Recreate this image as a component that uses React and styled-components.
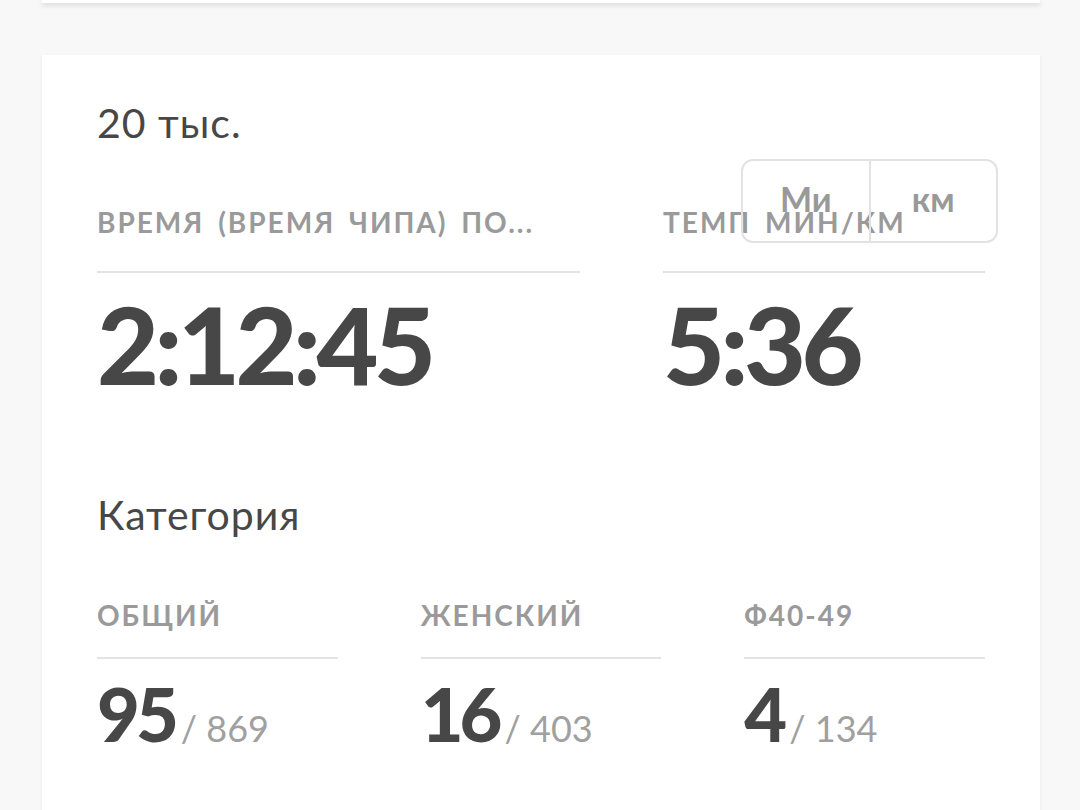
import React from "react";
import styled, { createGlobalStyle } from "styled-components";

const GlobalStyle = createGlobalStyle`
    html, body {
        margin: 0;
        padding: 0;
        background: #f8f8f8;
        font-family: 'Lato', 'Open Sans', sans-serif;
        overflow: hidden;
    }
`

const Page = styled.div`
    width: 1080px;
    height: 810px;
    padding: 0 40px 0 42px;
    box-sizing: border-box;
`

const TopCard = styled.div`
    height: 3px;
    background: #ffffff;
    box-shadow: 0 2px 5px rgba(0, 0, 0, 0.18);
    margin-bottom: 52px;
`

const Card = styled.div`
    position: relative;
    background: #ffffff;
    box-shadow: 0 1px 3px rgba(0, 0, 0, 0.07);
    padding: 44px 55px 90px 55px;
`

const Heading = styled.div`
    font-size: 41px;
    line-height: 48px;
    font-weight: 400;
    letter-spacing: 1px;
    color: #474747;
    margin-top: ${({ top }) => top || 0}px;
`

const Row = styled.div`
    display: flex;
    gap: 83px;
    margin-top: ${({ top }) => top}px;
`

const Column = styled.div`
    flex: ${({ grow }) => grow || 1};
    min-width: 0;
`

const Label = styled.div`
    font-size: 28px;
    line-height: 34px;
    font-weight: 700;
    letter-spacing: 2px;
    word-spacing: 5px;
    text-transform: uppercase;
    color: #9a9a9a;
    white-space: nowrap;
    padding-bottom: ${({ pad }) => pad}px;
    border-bottom: 2px solid #e3e3e3;
`

const BigValue = styled.div`
    margin-top: 17px;
    font-size: 107px;
    line-height: 107px;
    font-weight: 900;
    letter-spacing: -4.5px;
    color: #474747;
`

const Rank = styled.div`
    margin-top: 17px;
    display: flex;
    align-items: baseline;
    gap: 6px;
`

const RankValue = styled.span`
    font-size: 74px;
    line-height: 75px;
    font-weight: 900;
    letter-spacing: -4px;
    color: #474747;
`

const RankTotal = styled.span`
    font-size: 36px;
    font-weight: 400;
    color: #a0a0a0;
`

const UnitToggle = styled.div`
    position: absolute;
    top: 104px;
    right: 42px;
    width: 257px;
    height: 84px;
    box-sizing: border-box;
    border: 2px solid #e2e2e2;
    border-radius: 12px;
    display: flex;
`

const UnitOption = styled.div`
    flex: 1;
    display: flex;
    align-items: center;
    justify-content: center;
    font-size: 34px;
    font-weight: 700;
    color: #999999;
    padding-bottom: 6px;
    & + & {
        border-left: 2px solid #e2e2e2;
    }
`

const ranks = [
    { label: "Общий", value: "95", total: "869" },
    { label: "Женский", value: "16", total: "403" },
    { label: "Ф40-49", value: "4", total: "134" },
]

export default function App() {
    return (
        <Page>
            <GlobalStyle />
            <TopCard />
            <Card>
                <Heading>20 тыс.</Heading>

                <Row top={58}>
                    <Column grow={3}>
                        <Label pad={32}>Время (время чипа) по...</Label>
                        <BigValue>2:12:45</BigValue>
                    </Column>
                    <Column grow={2}>
                        <Label pad={32}>Темп мин/км</Label>
                        <BigValue>5:36</BigValue>
                    </Column>
                </Row>

                <Heading top={94}>Категория</Heading>

                <Row top={59}>
                    {ranks.map((r) => (
                        <Column key={r.label}>
                            <Label pad={25}>{r.label}</Label>
                            <Rank>
                                <RankValue>{r.value}</RankValue>
                                <RankTotal>/ {r.total}</RankTotal>
                            </Rank>
                        </Column>
                    ))}
                </Row>

                <UnitToggle>
                    <UnitOption>Ми</UnitOption>
                    <UnitOption>км</UnitOption>
                </UnitToggle>
            </Card>
        </Page>
    )
}
